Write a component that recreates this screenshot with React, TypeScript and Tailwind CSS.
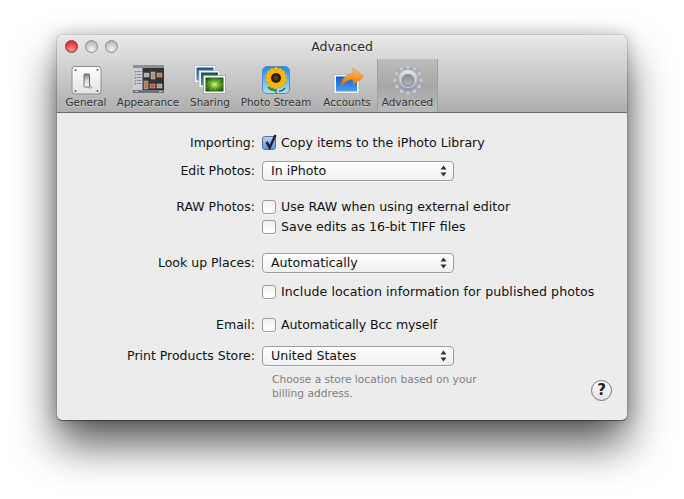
import React from "react";

const font = "font-['DejaVu_Sans',sans-serif]";

function GeneralIcon() {
  return (
    <svg width="32" height="30" viewBox="-1 -1 32 30">
      <defs>
        <linearGradient id="gplate" x1="0" y1="0" x2="0" y2="1">
          <stop offset="0" stopColor="#ffffff" />
          <stop offset="1" stopColor="#e2e2e2" />
        </linearGradient>
        <linearGradient id="gsw" x1="0" y1="0" x2="0" y2="1">
          <stop offset="0" stopColor="#7d7d7d" />
          <stop offset="0.5" stopColor="#d8d8d8" />
          <stop offset="1" stopColor="#f8f8f8" />
        </linearGradient>
      </defs>
      <rect x="1" y="0.5" width="29" height="27.5" rx="3" fill="url(#gplate)" stroke="#8e8e8e" />
      <circle cx="4.5" cy="4" r="0.9" fill="#555" />
      <circle cx="26.5" cy="4" r="0.9" fill="#555" />
      <circle cx="4.5" cy="25" r="0.9" fill="#555" />
      <circle cx="26.5" cy="25" r="0.9" fill="#555" />
      <path d="M18 17l4 5-3 1-3-2z" fill="#999" opacity="0.6" />
      <rect x="13" y="8" width="5.5" height="13" rx="0.7" fill="url(#gsw)" stroke="#555" strokeWidth="0.8" />
    </svg>
  );
}

function AppearanceIcon() {
  const thumbs = [
    [11, 8, 5, 4, "#a9b3a6"],
    [18, 7, 4, 7, "#b98d7d"],
    [24, 8, 5, 4, "#c47a4a"],
    [11, 16, 4, 8, "#b07a55"],
    [17, 19, 5, 4, "#c2582f"],
    [24, 19, 5, 4, "#9aa49a"],
  ] as const;
  return (
    <svg width="32" height="30" viewBox="-1 0 32 30">
      <rect x="0" y="0" width="32" height="28" rx="1" fill="#333333" />
      <rect x="0" y="0" width="32" height="3" fill="#8c9096" />
      <rect x="0" y="25" width="32" height="3" fill="#6f7175" />
      <rect x="0" y="3" width="9.5" height="22" fill="#c9ced8" />
      {[6, 9, 12, 15, 18].map((y, i) => (
        <g key={y}>
          <rect x="1.5" y={y} width="1.4" height="1.4" fill={i % 2 ? "#d88a2c" : "#5a7fb8"} />
          <rect x="3.5" y={y} width="5" height="1" fill="#8890a0" />
        </g>
      ))}
      {thumbs.map(([x, y, w, h, c], i) => (
        <rect key={i} x={x} y={y} width={w} height={h} fill={c} stroke="#d5d5d5" strokeWidth="0.4" />
      ))}
      <rect x="2" y="26" width="3" height="1" fill="#ccc" />
      <rect x="26" y="26" width="3" height="1" fill="#ccc" />
    </svg>
  );
}

function SharingIcon() {
  return (
    <svg width="32" height="30" viewBox="0 0 32 30">
      <defs>
        <radialGradient id="sgreen" cx="0.5" cy="0.5" r="0.6">
          <stop offset="0" stopColor="#e0f49a" />
          <stop offset="0.45" stopColor="#5da61f" />
          <stop offset="1" stopColor="#1e4f10" />
        </radialGradient>
        <linearGradient id="sblue" x1="0" y1="0" x2="0" y2="1">
          <stop offset="0" stopColor="#1e4f8f" />
          <stop offset="1" stopColor="#4f9bd8" />
        </linearGradient>
        <linearGradient id="steal" x1="0" y1="0" x2="0" y2="1">
          <stop offset="0" stopColor="#16504f" />
          <stop offset="1" stopColor="#4aa28d" />
        </linearGradient>
      </defs>
      <rect x="0.5" y="0.5" width="21" height="17" fill="#f8f8f8" stroke="#a5a5a5" strokeWidth="0.6" />
      <rect x="2.5" y="2.5" width="17" height="13" fill="url(#sblue)" />
      <rect x="5" y="5.5" width="21" height="17" fill="#f8f8f8" stroke="#a5a5a5" strokeWidth="0.6" />
      <rect x="7" y="7.5" width="17" height="13" fill="url(#steal)" />
      <rect x="9.5" y="10.5" width="22" height="18" fill="#fcfcfc" stroke="#888" strokeWidth="0.6" />
      <rect x="11.5" y="12.5" width="18" height="14" fill="url(#sgreen)" />
      <path d="M16 25Q20 19 28 14M20 25Q23 20 29 19M14 17Q18 16 21 20" fill="none" stroke="#d4ee8a" strokeWidth="0.5" opacity="0.7" />
    </svg>
  );
}

function StreamIcon() {
  const petals = Array.from({ length: 14 }, (_, i) => (i * 360) / 14);
  return (
    <svg width="28" height="28" viewBox="0 0 28 28">
      <defs>
        <linearGradient id="sky" x1="0" y1="0" x2="0" y2="1">
          <stop offset="0" stopColor="#1f88e8" />
          <stop offset="1" stopColor="#b4e2f9" />
        </linearGradient>
      </defs>
      <rect x="0.5" y="0.5" width="27" height="27" rx="4.5" fill="url(#sky)" stroke="#4f8cc8" />
      <path d="M14 20V27" stroke="#2f7a2a" strokeWidth="1.4" fill="none" />
      <path d="M14 24Q9 20 5 21Q8 26 14 25Z" fill="#3f8f35" />
      <path d="M17 25Q20 26 23 22" stroke="#1f5a20" strokeWidth="1.3" fill="none" />
      {petals.map((a) => (
        <ellipse key={a} cx="14" cy="5.2" rx="2.4" ry="4.1" fill="#f9bd0f" stroke="#e08a00" strokeWidth="0.4" transform={`rotate(${a} 14 12)`} />
      ))}
      <circle cx="14" cy="12" r="5" fill="#2e1c0c" />
      <circle cx="14" cy="12" r="2.4" fill="#5b3a18" />
    </svg>
  );
}

function AccountsIcon() {
  return (
    <svg width="32" height="30" viewBox="0 0 32 30">
      <defs>
        <linearGradient id="ablue" x1="0" y1="0" x2="0" y2="1">
          <stop offset="0" stopColor="#0d5cd0" />
          <stop offset="1" stopColor="#4ba0ee" />
        </linearGradient>
        <linearGradient id="aorange" x1="0" y1="0" x2="0" y2="1">
          <stop offset="0" stopColor="#ffc468" />
          <stop offset="0.55" stopColor="#f58f1e" />
          <stop offset="1" stopColor="#d9600c" />
        </linearGradient>
      </defs>
      <rect x="3" y="9.5" width="25" height="19" fill="#f7f7f7" stroke="#a0a0a0" strokeWidth="0.6" />
      <rect x="5" y="11.5" width="21" height="15" fill="url(#ablue)" />
      <path d="M10 23C10 14 15 8.5 22 8.5V3L33 11.5L22 20V14.5C17 14.5 13 17 10 23Z" fill="url(#aorange)" stroke="#d07a20" strokeWidth="0.4" />
    </svg>
  );
}

function GearIcon() {
  const teeth = Array.from({ length: 12 }, (_, i) => i * 30);
  return (
    <svg width="30" height="30" viewBox="0 0 30 30">
      <defs>
        <linearGradient id="gear" x1="0" y1="0" x2="0" y2="1">
          <stop offset="0" stopColor="#e2e5ea" />
          <stop offset="0.5" stopColor="#b4bac3" />
          <stop offset="1" stopColor="#8e95a2" />
        </linearGradient>
        <linearGradient id="gearhole" x1="0" y1="0" x2="0" y2="1">
          <stop offset="0" stopColor="#8a8d93" />
          <stop offset="1" stopColor="#b8b8b8" />
        </linearGradient>
      </defs>
      {teeth.map((a) => (
        <path key={a} d="M11.8 6L13 0.8Q15 0.2 17 0.8L18.2 6Z" fill="url(#gear)" stroke="#8b919b" strokeWidth="0.4" transform={`rotate(${a} 15 15)`} />
      ))}
      <circle cx="15" cy="15" r="10.5" fill="url(#gear)" stroke="#9aa0aa" strokeWidth="0.4" />
      <circle cx="15" cy="15" r="7.5" fill="none" stroke="#eef0f3" strokeWidth="0.8" opacity="0.7" />
      <circle cx="15" cy="15" r="5.5" fill="url(#gearhole)" stroke="#70757e" strokeWidth="0.7" />
    </svg>
  );
}

function ToolItem({ label, icon, w, active }: { label: string; icon: React.ReactNode; w: string; active?: boolean }) {
  return (
    <div className={`${w} flex flex-col items-center h-[53px] pt-[5px] ${active ? "bg-gradient-to-b from-[#bdbdbd] via-[#a7a7a7] to-[#b9b9b9] border-x border-[#a0a0a0]" : ""}`}>
      <div className="h-[31px] flex items-center justify-center">{icon}</div>
      <span className="text-[10.4px] leading-[15px] text-[#333333] whitespace-nowrap [text-shadow:0_1px_0_rgba(255,255,255,0.35)]">{label}</span>
    </div>
  );
}

function Row({ label, top, children }: { label?: string; top: string; children: React.ReactNode }) {
  return (
    <div className={`flex items-center h-5 ${top}`}>
      <div className="w-[198px] text-right text-[12.5px] text-[#111111] whitespace-nowrap">{label}</div>
      <div className="ml-[7px] flex items-center">{children}</div>
    </div>
  );
}

function Check({ text, checked, tracking = "" }: { text: string; checked?: boolean; tracking?: string }) {
  return (
    <div className="flex items-center">
      {checked ? (
        <span className="w-[14px] h-[14px] rounded-[3px] border border-[#5a6f90] bg-gradient-to-b from-[#b4d0f0] to-[#5f97de] relative">
          <svg className="absolute -left-px -top-[3px]" width="16" height="16" viewBox="0 0 16 16">
            <path d="M4.5 8L7.7 13.5L13.5 1" fill="none" stroke="#17233a" strokeWidth="2.5" />
          </svg>
        </span>
      ) : (
        <span className="w-[14px] h-[14px] rounded-[3px] border border-[#9a9a9a] bg-gradient-to-b from-[#f2f2f2] to-[#ffffff] shadow-[0_1px_0_rgba(255,255,255,0.7)]" />
      )}
      <span className={`ml-[5px] text-[12.6px] text-[#111111] whitespace-nowrap ${tracking}`}>{text}</span>
    </div>
  );
}

function Select({ text }: { text: string }) {
  return (
    <div className="w-[192px] h-[20px] rounded-[4px] border border-[#9c9c9c] bg-gradient-to-b from-[#ffffff] to-[#f0f0f0] shadow-[0_1px_0_rgba(255,255,255,0.6)] flex items-center justify-between pl-2 pr-[6px]">
      <span className="text-[12.6px] text-[#111111] whitespace-nowrap">{text}</span>
      <svg width="7" height="12" viewBox="0 0 7 12">
        <path d="M3.5 0.5L6.5 4.5H0.5Z M3.5 11.5L0.5 7.5H6.5Z" fill="#333" />
      </svg>
    </div>
  );
}

export default function App() {
  return (
    <div className={`w-[684px] h-[499px] bg-white overflow-hidden pt-[35px] pl-[57px] ${font}`}>
      <div className="w-[570px] h-[385px] rounded-[5px] bg-[#ececec] flex flex-col shadow-[0_0_1px_rgba(0,0,0,0.7),0_1px_1px_rgba(0,0,0,0.4),0_24px_44px_rgba(0,0,0,0.66),0_0_16px_rgba(0,0,0,0.22)]">
        <div className="h-[78px] rounded-t-[5px] border-t border-[#ececec] border-b border-b-[#6a6a6a] bg-gradient-to-b from-[#e8e8e8] via-[#cbcbcb] to-[#aeaeae] flex flex-col">
          <div className="relative h-[23px] flex items-center justify-center shrink-0">
            <div className="absolute left-[8px] top-[4px] flex gap-[7px]">
              <span className="w-[13px] h-[13px] rounded-full border border-[#8a3a3a] bg-[radial-gradient(circle_at_50%_75%,#ff9a9a,#ee3a42_60%,#c0202a)]" />
              <span className="w-[13px] h-[13px] rounded-full border border-[#8d8d8d] bg-[radial-gradient(circle_at_50%_75%,#f2f2f2,#c6c6c6_60%,#a4a4a4)]" />
              <span className="w-[13px] h-[13px] rounded-full border border-[#8d8d8d] bg-[radial-gradient(circle_at_50%_75%,#f2f2f2,#c6c6c6_60%,#a4a4a4)]" />
            </div>
            <span className="text-[12.5px] text-[#2a2a2a] [text-shadow:0_1px_0_rgba(255,255,255,0.5)]">Advanced</span>
          </div>
          <div className="flex pl-[4px] items-start">
            <ToolItem label="General" icon={<GeneralIcon />} w="w-[50px]" />
            <ToolItem label="Appearance" icon={<AppearanceIcon />} w="w-[74px]" />
            <ToolItem label="Sharing" icon={<SharingIcon />} w="w-[50px]" />
            <ToolItem label="Photo Stream" icon={<StreamIcon />} w="w-[82px]" />
            <ToolItem label="Accounts" icon={<AccountsIcon />} w="w-[60px]" />
            <ToolItem label="Advanced" icon={<GearIcon />} w="w-[61px]" active />
          </div>
        </div>
        <div className="flex-1 flex flex-col pt-[20px] relative">
          <Row label="Importing:" top=""><Check text="Copy items to the iPhoto Library" checked /></Row>
          <Row label="Edit Photos:" top="mt-2"><Select text="In iPhoto" /></Row>
          <Row label="RAW Photos:" top="mt-4"><Check text="Use RAW when using external editor" /></Row>
          <Row top=""><Check text="Save edits as 16-bit TIFF files" /></Row>
          <Row label="Look up Places:" top="mt-4"><Select text="Automatically" /></Row>
          <Row top="mt-[9px]"><Check text="Include location information for published photos" tracking="tracking-[0.07px]" /></Row>
          <Row label="Email:" top="mt-[13px]"><Check text="Automatically Bcc myself" tracking="tracking-[-0.13px]" /></Row>
          <Row label="Print Products Store:" top="mt-[11px]"><Select text="United States" /></Row>
          <p className="ml-[215px] mt-[7px] text-[10.65px] leading-[14px] text-[#7f7f7f] w-[215px]">Choose a store location based on your billing address.</p>
          <span className="absolute right-[15px] bottom-[19px] w-[21px] h-[21px] rounded-full border border-[#777] bg-gradient-to-b from-[#ffffff] to-[#e2e2e2] flex items-center justify-center text-[15px] font-bold text-[#222]">?</span>
        </div>
      </div>
    </div>
  );
}
